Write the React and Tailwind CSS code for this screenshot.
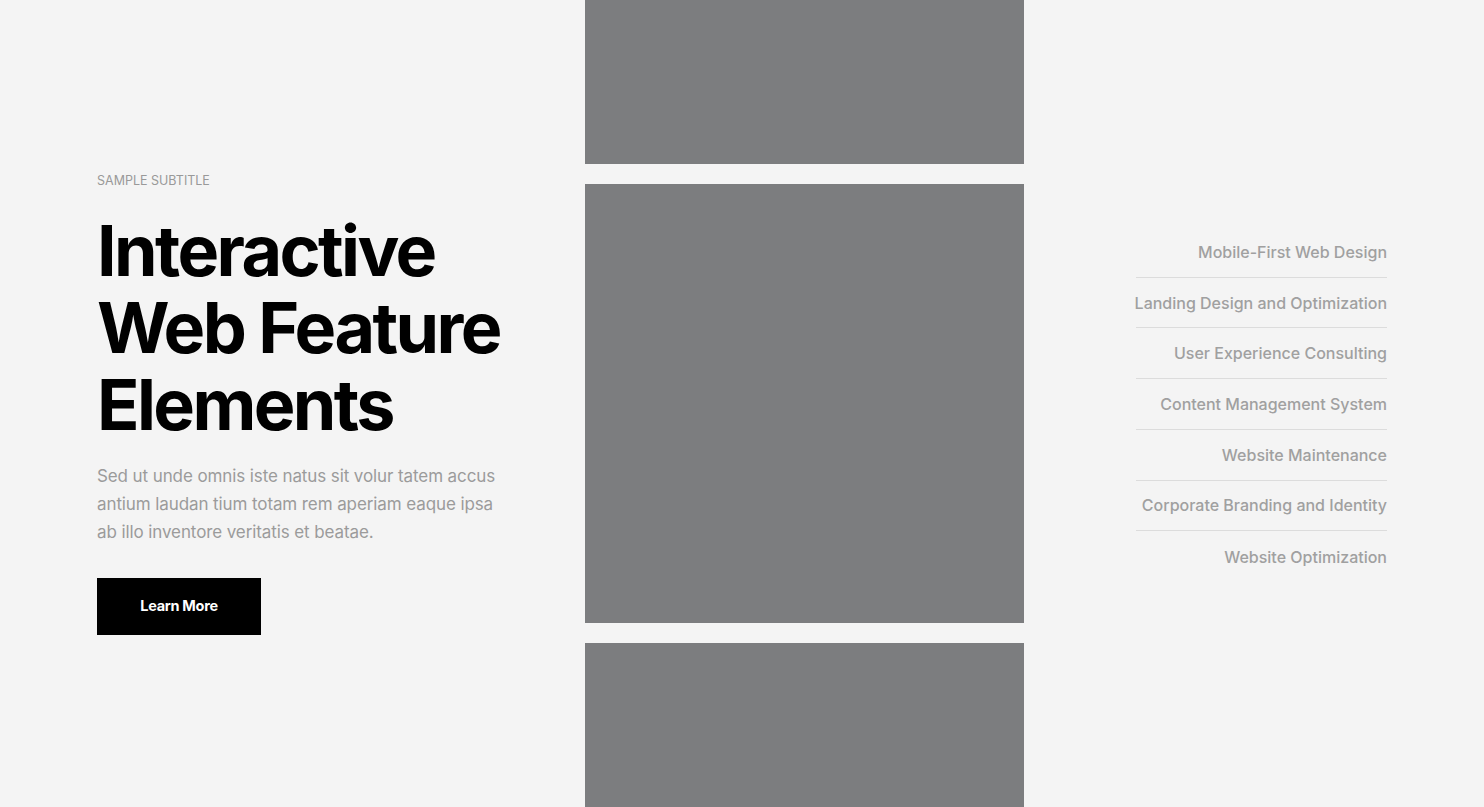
export default function App() {
  const items = [
    "Mobile-First Web Design",
    "Landing Design and Optimization",
    "User Experience Consulting",
    "Content Management System",
    "Website Maintenance",
    "Corporate Branding and Identity",
    "Website Optimization",
  ];
  const lines = ["Interactive", "Web Feature", "Elements"];
  return (
    <div className="h-[807px] w-full overflow-hidden bg-[#f4f4f4] flex" style={{ fontFamily: "Inter, 'Noto Sans', sans-serif" }}>
      <div className="w-[585px] pl-[97px] flex flex-col justify-center">
        <div className="text-[12.5px] leading-[16px] text-[#999] uppercase">Sample Subtitle</div>
        <h1 className="mt-[23px] text-[70px] font-bold text-black tracking-[-2.6px]">
          {lines.map((l) => (
            <div key={l} className="h-[77px] leading-[77px] whitespace-nowrap">{l}</div>
          ))}
        </h1>
        <p className="mt-[19px] w-[412px] text-[17px] leading-[28px] text-[#9b9b9b] tracking-[-0.1px]">
          Sed ut unde omnis iste natus sit volur tatem accus antium laudan tium totam rem aperiam eaque ipsa ab illo inventore veritatis et beatae.
        </p>
        <div className="mt-[32px]">
          <button className="w-[164px] h-[57px] bg-black text-white text-[14.5px] font-bold tracking-[-0.3px]">Learn More</button>
        </div>
      </div>
      <div className="w-[439px] flex flex-col justify-center gap-[20px] shrink-0">
        <div className="h-[164px] bg-[#7c7d7f] shrink-0" />
        <div className="h-[439px] bg-[#7c7d7f] shrink-0" />
        <div className="h-[164px] bg-[#7c7d7f] shrink-0" />
      </div>
      <div className="flex-1 pr-[97px] flex flex-col justify-center items-end">
        <ul className="w-[251px] pt-[2px]">
          {items.map((t, i) => (
            <li
              key={t}
              className={`h-[50.7px] flex items-center justify-end text-[16px] font-medium text-[#a0a0a0] tracking-[0px] whitespace-nowrap ${i < items.length - 1 ? "border-b border-[#dcdcdc]" : ""}`}
            >
              {t}
            </li>
          ))}
        </ul>
      </div>
    </div>
  );
}
